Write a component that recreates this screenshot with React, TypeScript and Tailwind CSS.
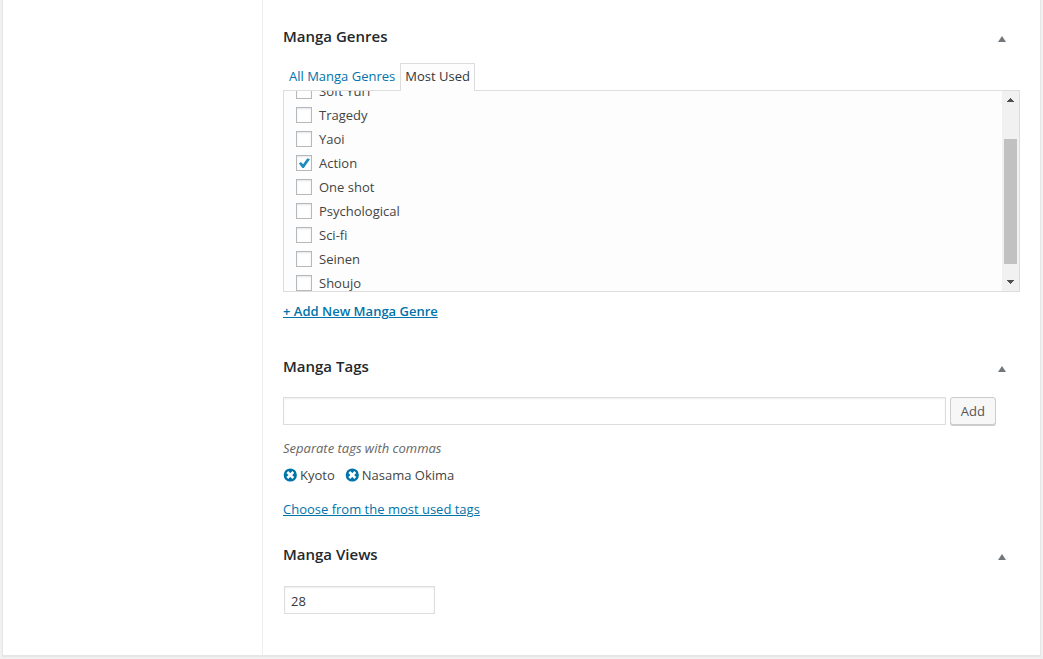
import { useState } from "react";

const GENRES = ["Soft Yuri", "Tragedy", "Yaoi", "Action", "One shot", "Psychological", "Sci-fi", "Seinen", "Shoujo"];

function SectionHeader({ title }: { title: string }) {
  return (
    <div className="flex h-6 items-center justify-between pr-[10px]">
      <h2 className="text-[15px] leading-6 font-semibold text-[#23282d]">{title}</h2>
      <button type="button" aria-label={`Toggle ${title}`} className="mt-[6px] flex h-4 w-4 items-center justify-center">
        <svg width="8" height="6" viewBox="0 0 8 6" fill="#72777c" aria-hidden="true">
          <path d="M4 0 8 6H0Z" />
        </svg>
      </button>
    </div>
  );
}

function GenreRow({ name }: { name: string }) {
  const [checked, setChecked] = useState(name === "Action");
  return (
    <li>
      <label className="flex h-6 items-center gap-[7px]">
        <span className="grid h-4 w-4 shrink-0">
          <input
            type="checkbox"
            checked={checked}
            onChange={() => setChecked(!checked)}
            className="col-start-1 row-start-1 h-4 w-4 appearance-none border border-[#b4b9be] bg-white shadow-[inset_0_1px_2px_rgba(0,0,0,0.1)]"
          />
          {checked && (
            <svg
              className="pointer-events-none col-start-1 row-start-1"
              width="16"
              height="16"
              viewBox="0 0 16 16"
              fill="#1e8cbe"
              aria-hidden="true"
            >
              <path d="M11.3 3.2 14 4.3 7.8 12.9H6.4L2.9 8.5 4.9 7.1 7.1 9.3Z" />
            </svg>
          )}
        </span>
        <span>{name}</span>
      </label>
    </li>
  );
}

function ScrollBar() {
  return (
    <div className="flex w-[17px] shrink-0 flex-col items-center bg-[#f1f1f1]" aria-hidden="true">
      <div className="flex h-[17px] items-center">
        <svg width="7" height="4" viewBox="0 0 7 4" fill="#505050">
          <path d="M3 0H4V1H5V2H6V3H7V4H0V3H1V2H2V1H3Z" />
        </svg>
      </div>
      <div className="w-[13px] flex-1 pt-[31px]">
        <div className="h-[125px] bg-[#c1c1c1]" />
      </div>
      <div className="flex h-[17px] items-center pb-px">
        <svg width="7" height="4" viewBox="0 0 7 4" fill="#505050">
          <path d="M0 0H7V1H6V2H5V3H4V4H3V3H2V2H1V1H0Z" />
        </svg>
      </div>
    </div>
  );
}

function Tag({ name }: { name: string }) {
  return (
    <li className="flex items-center gap-[3px]">
      <button type="button" aria-label={`Remove tag ${name}`}>
        <svg width="14" height="14" viewBox="0 0 14 14" aria-hidden="true">
          <circle cx="7.3" cy="7" r="6.6" fill="#0073aa" />
          <path d="M4.3 4 10.3 10M10.3 4 4.3 10" stroke="#fff" strokeWidth="2.6" />
        </svg>
      </button>
      <span>{name}</span>
    </li>
  );
}

export default function App() {
  return (
    <div className="bg-[#f1f1f1] pr-0.5 pb-1 pl-0.5 font-['Open_Sans','Noto_Sans',sans-serif] text-[13px] leading-5 text-[#444]">
      <div className="flex border-x border-b border-[#e5e5e5] bg-white shadow-[0_1px_1px_rgba(0,0,0,0.04)]">
        <div className="w-[260px] shrink-0 border-r border-[#eee]" />
        <main className="min-w-0 flex-1 pt-6 pr-5 pb-[41px] pl-5">
          <section>
            <SectionHeader title="Manga Genres" />
            <div className="mt-[15px] flex h-7 items-stretch">
              <button type="button" className="pr-[5px] pb-[2px] pl-[6px] text-[#0073aa]">
                All Manga Genres
              </button>
              <button
                type="button"
                className="relative z-10 border border-b-0 border-[#ddd] bg-[#fdfdfd] px-1 pb-[3px] text-[#32373c]"
              >
                Most Used
              </button>
            </div>
            <div className="-mt-px flex h-[202px] border border-[#ddd] bg-[#fdfdfd]">
              <div className="min-w-0 flex-1 overflow-y-auto pl-3 [scrollbar-width:none]">
                <ul className="-mt-3">
                  {GENRES.map((name) => (
                    <GenreRow key={name} name={name} />
                  ))}
                </ul>
              </div>
              <ScrollBar />
            </div>
            <a href="#add-genre" className="mt-[9px] inline-block font-semibold text-[#0073aa] underline">
              + Add New Manga Genre
            </a>
          </section>

          <section className="mt-[33px]">
            <SectionHeader title="Manga Tags" />
            <div className="mt-[19px] flex gap-1 pr-6">
              <input
                type="text"
                aria-label="Add new tag"
                className="h-7 min-w-0 flex-1 border border-[#ddd] bg-white px-[6px] text-[#32373c] shadow-[inset_0_1px_2px_rgba(0,0,0,0.07)] outline-none"
              />
              <button
                type="button"
                className="h-7 rounded-[3px] border border-[#ccc] bg-[#f7f7f7] px-[10px] text-[#555] shadow-[0_1px_0_#ccc]"
              >
                Add
              </button>
            </div>
            <p className="mt-[13px] text-[#666] italic">Separate tags with commas</p>
            <ul className="mt-[7px] flex gap-[10px]">
              <Tag name="Kyoto" />
              <Tag name="Nasama Okima" />
            </ul>
            <a href="#popular-tags" className="mt-[14px] inline-block text-[#0073aa] underline">
              Choose from the most used tags
            </a>
          </section>

          <section className="mt-[23px]">
            <SectionHeader title="Manga Views" />
            <input
              type="text"
              defaultValue="28"
              aria-label="Manga Views"
              className="mt-5 ml-px block h-7 w-[151px] border border-[#ddd] bg-white px-[6px] pt-px text-[#32373c] shadow-[inset_0_1px_2px_rgba(0,0,0,0.07)] outline-none"
            />
          </section>
        </main>
      </div>
    </div>
  );
}
